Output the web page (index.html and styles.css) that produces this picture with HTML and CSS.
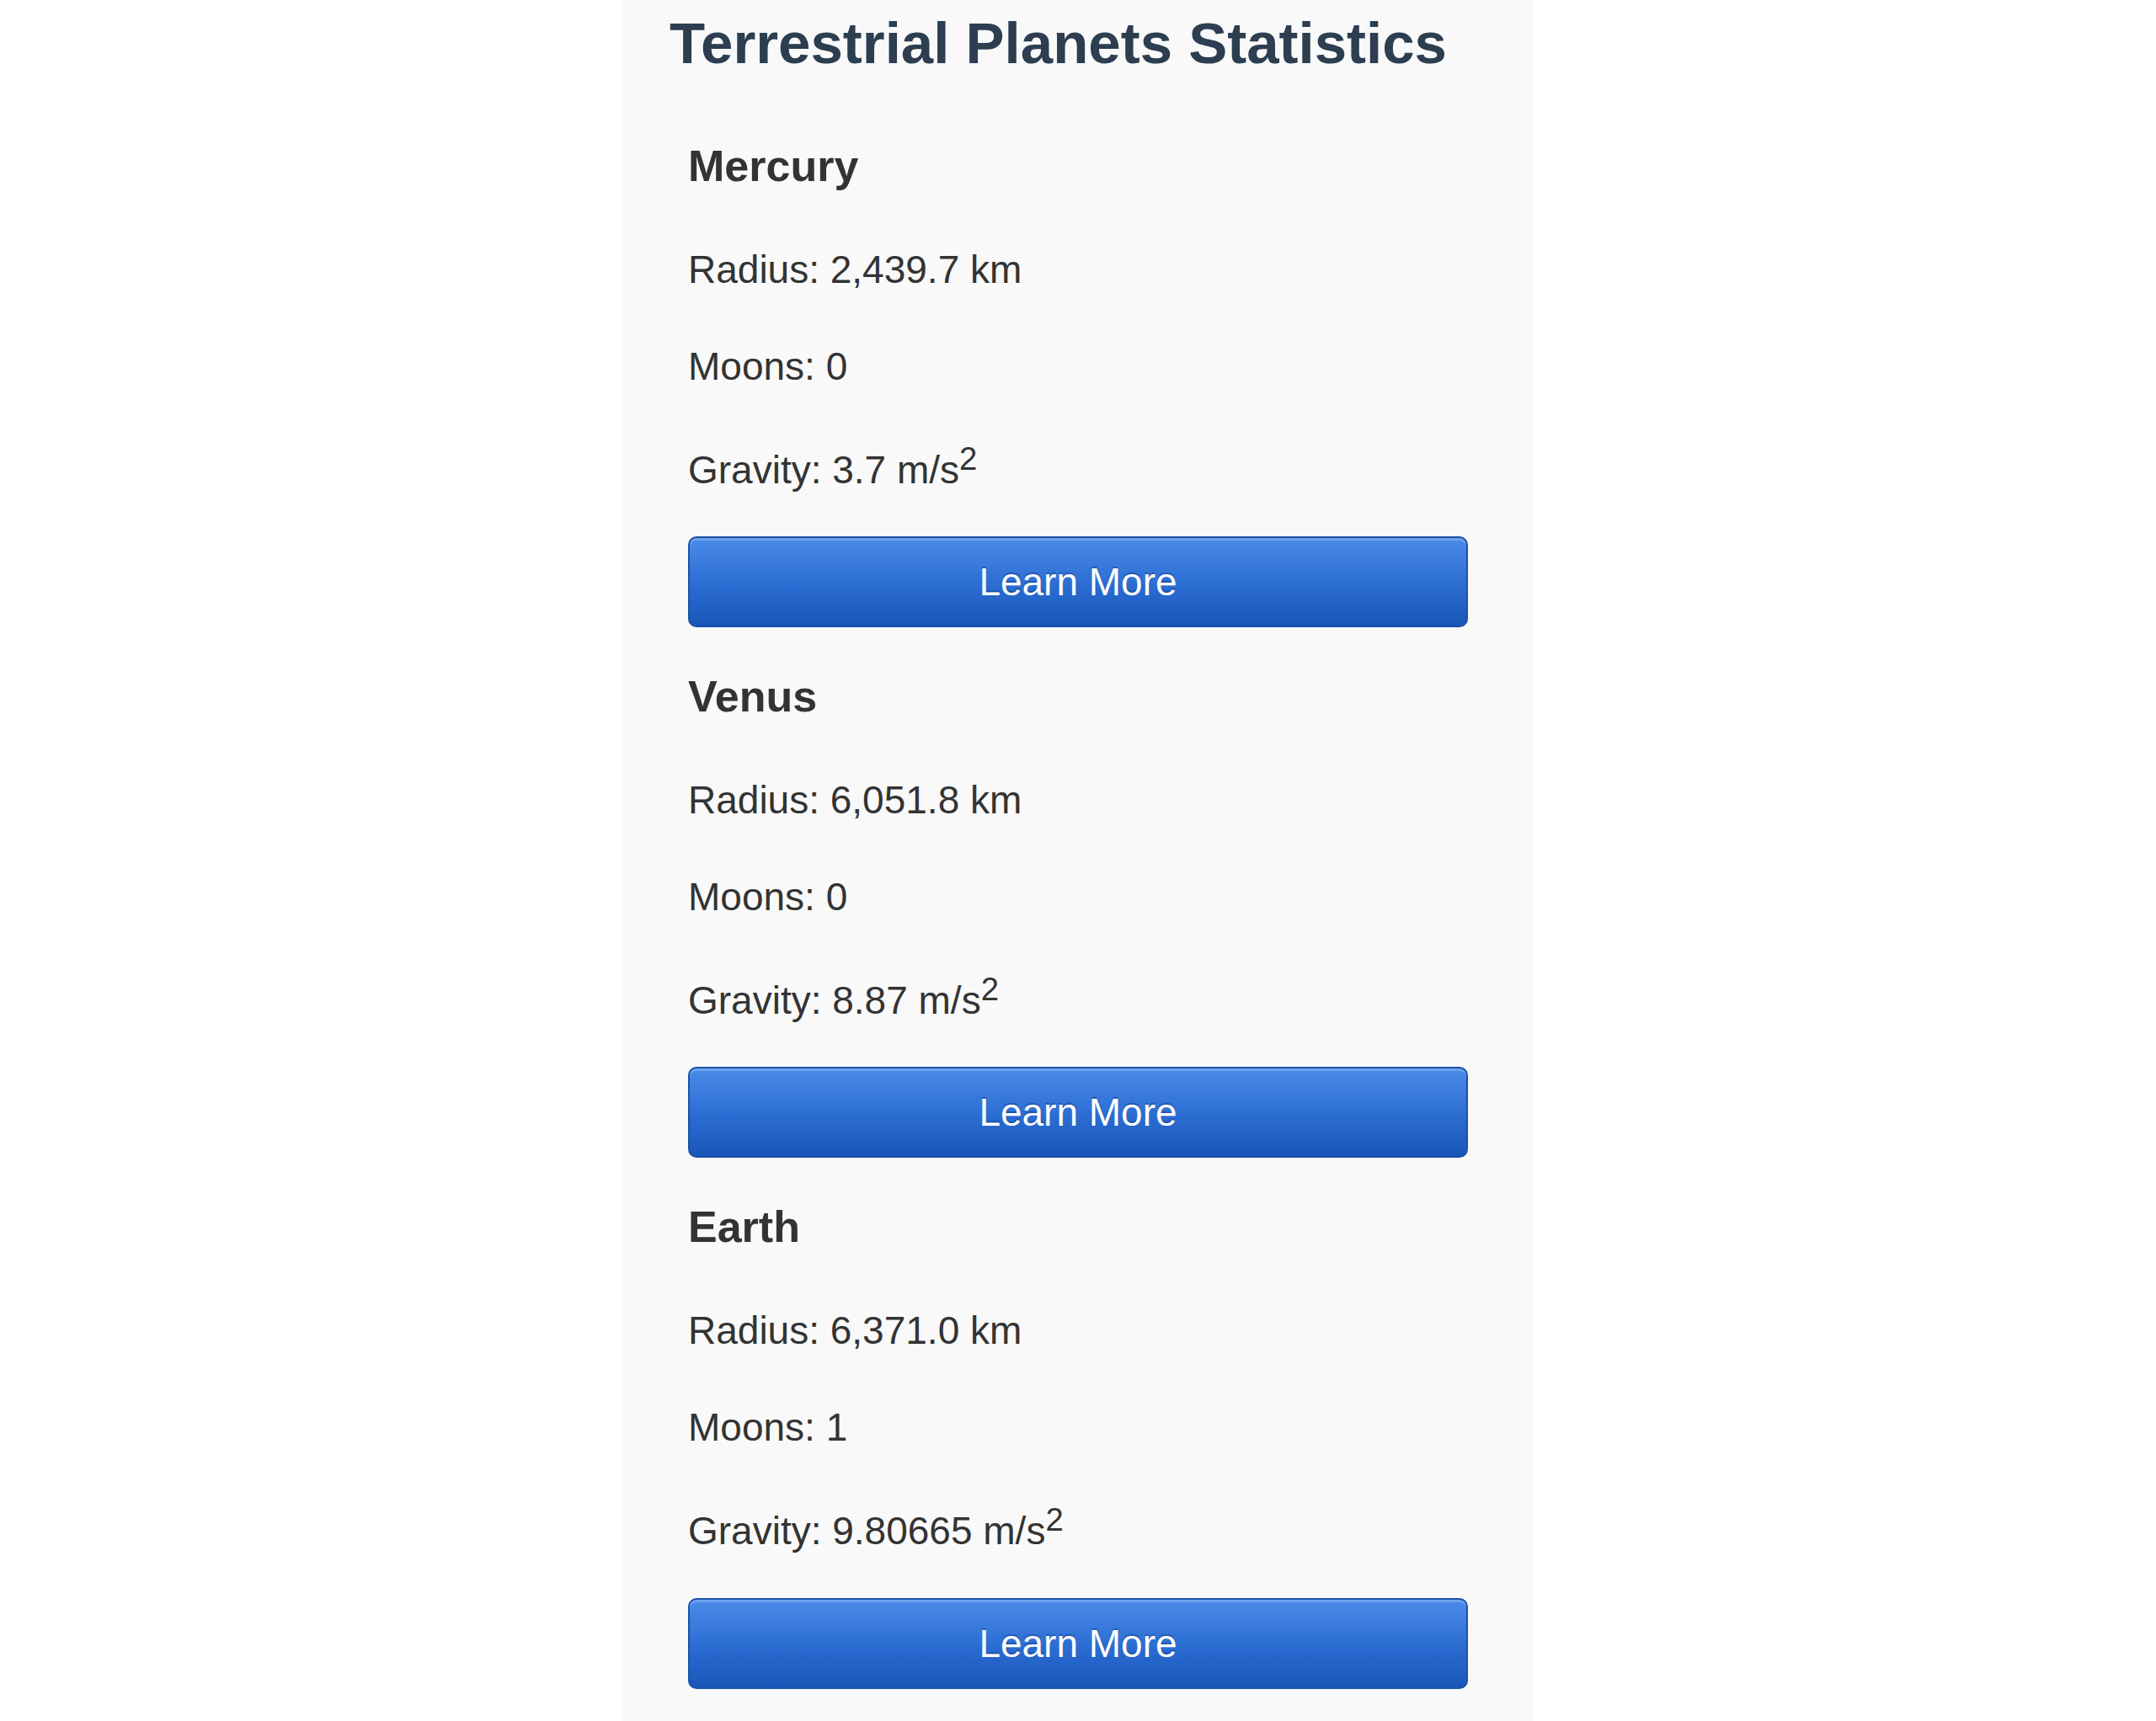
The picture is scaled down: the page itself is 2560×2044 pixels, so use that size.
FILE: index.html
```html
<!DOCTYPE html>
<html lang="en">
<head>
  <meta charset="UTF-8" />
  <meta name="viewport" content="width=device-width, initial-scale=1.0" />
  <title>Terrestrial Planets Statistics</title>
  <link rel="stylesheet" href="styles.css">
</head>
<body>

  <div class="container">
    <h1>Terrestrial Planets Statistics</h1>

    <div class="planet">
      <h3>Mercury</h3>
      <p>Radius: 2,439.7 km</p>
      <p>Moons: 0</p>
      <p>Gravity: 3.7 m/s<sup>2</sup></p>
      <button class="learn">Learn More</button>
    </div>

    <div class="planet">
      <h3>Venus</h3>
      <p>Radius: 6,051.8 km</p>
      <p>Moons: 0</p>
      <p>Gravity: 8.87 m/s<sup>2</sup></p>
      <button class="learn">Learn More</button>
    </div>

    <div class="planet">
      <h3>Earth</h3>
      <p>Radius: 6,371.0 km</p>
      <p>Moons: 1</p>
      <p>Gravity: 9.80665 m/s<sup>2</sup></p>
      <button class="learn">Learn More</button>
    </div>
  </div>

</body>
</html>
```

FILE: styles.css
```css
body {
  margin: 0;
  background: #fff;
  color: #333;
  font-family: "Liberation Sans", Arial, Helvetica, sans-serif;
  line-height: 1.5;
}
.container {
  box-sizing: border-box;
  width: 1080px;
  margin: 0 auto;
  padding: 11px 55px 40px;
  background: #f9f9f9;
  min-height: 2044px;
}
.container h1 {
  margin: 0 0 42px;
  font-size: 69px;
  line-height: 1.2;
  color: #2c3e50;
}
.planet {
  padding: 22px 22px 21px;
}
.planet h3 {
  margin: 0 0 50px;
  font-size: 52px;
  color: #333;
}
.planet p {
  margin: 46px 0;
  font-size: 46px;
}
.planet p:last-of-type {
  margin-bottom: 44px;
}
.learn {
  display: block;
  box-sizing: border-box;
  width: 100%;
  height: 108px;
  margin: 0;
  border: 2px solid #1b51a8;
  border-radius: 10px;
  background: linear-gradient(#4a8be9, #2b6cd2 55%, #1956b8);
  box-shadow: inset 0 3px 0 rgba(255,255,255,0.2);
  color: #fff;
  font-family: inherit;
  font-size: 46px;
  text-shadow: 0 -2px 1px rgba(10,40,100,0.35);
  cursor: pointer;
}
```
